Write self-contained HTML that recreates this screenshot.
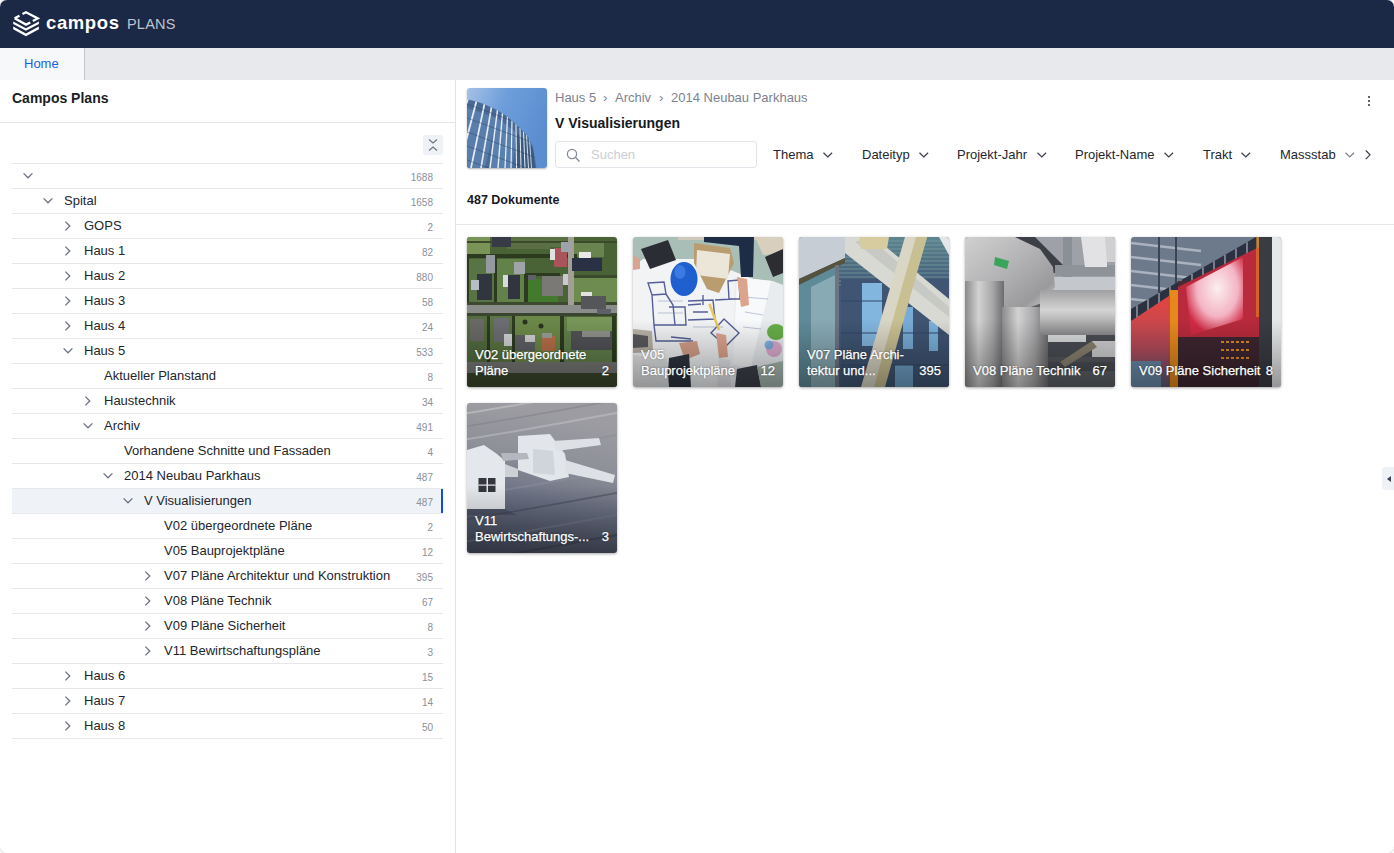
<!DOCTYPE html>
<html><head><meta charset="utf-8">
<style>
*{box-sizing:border-box;margin:0;padding:0}
html,body{width:1394px;height:853px;overflow:hidden;background:#fff;font-family:"Liberation Sans",sans-serif;color:#1f2329}
.app{position:absolute;left:0;top:0;width:1394px;height:853px;border-radius:7px;overflow:hidden;background:#fff;box-shadow:0 0 1px 1px rgba(0,0,0,.12)}
.hdr{position:absolute;left:0;top:0;width:1394px;height:48px;background:#1b2846}
.tabs{position:absolute;left:0;top:48px;width:1394px;height:32px;background:#e8e9ed}
.tab{position:absolute;left:0;top:0;width:85px;height:32px;background:#f7f8fa;border-right:1px solid #c3c7d0}
.tab span{position:absolute;left:24px;top:8px;font-size:13px;line-height:15px;color:#1862e0}
.a{position:absolute;white-space:nowrap}
.left{position:absolute;left:0;top:80px;width:456px;height:773px;border-right:1px solid #e2e4ea}
.ttl{font-size:14px;font-weight:bold;color:#1a1d22}
.row{position:absolute;left:12px;width:431px;height:26px;border-top:1px solid #e6e8ec;border-bottom:1px solid #e6e8ec}
.lbl{position:absolute;top:5px;font-size:13px;line-height:15px;color:#22262c;white-space:nowrap}
.num{position:absolute;right:10px;top:8px;font-size:10px;line-height:12px;color:#8a909b}
.chev{position:absolute;top:7px;width:10px;height:10px}
.right{position:absolute;left:456px;top:80px;width:938px;height:773px}
.bc{top:10px;font-size:13px;line-height:15px;color:#7c8290}
.filt{position:absolute;top:147px;font-size:13px;line-height:15px;color:#23272e;white-space:nowrap}
.card{position:absolute;width:150px;height:150px;border-radius:3px;overflow:hidden;box-shadow:0 1px 3px rgba(0,0,0,.35)}
.card svg{position:absolute;left:0;top:0}
.cap{position:absolute;left:8px;right:8px;bottom:8px;color:#fff;font-size:13px;line-height:16px;text-shadow:0 0 2px rgba(0,0,0,.6);-webkit-text-stroke:0.25px #fff}
.cap .n{position:absolute;right:0;bottom:0}
.shade{position:absolute;left:0;top:0;width:150px;height:150px;background:linear-gradient(to bottom,rgba(0,0,0,0) 55%,rgba(0,0,0,.35) 100%)}
</style></head><body>
<div class="app">
<div class="hdr">
  <svg class="a" style="left:12px;top:10px" width="28" height="28" viewBox="12 10 28 28">
    <g fill="none" stroke="#fff" stroke-width="2.3" stroke-linejoin="miter">
      <path d="M14.6 18.3 L19.5 15.7 M22.5 14.1 L26 12.3 L37.9 18.4 L32.8 21 M30.3 22.4 L26 24.6 L14.6 18.3"/>
    </g>
    <polygon fill="#fff" points="13.2,21.4 25.9,28.2 38.9,21.4 38.9,23.9 25.9,30.7 13.2,23.9"/>
    <polygon fill="#fff" points="13.2,26.6 25.9,33.6 38.9,26.6 38.9,29.3 25.9,36.3 13.2,29.3"/>
  </svg>
  <div class="a" style="left:46px;top:12px;font-size:18.5px;line-height:22px;font-weight:bold;color:#fff;letter-spacing:0.6px">campos</div>
  <div class="a" style="left:127px;top:16px;font-size:14.5px;line-height:17px;color:#bfc4ce;letter-spacing:0.2px">PLANS</div>
</div>
<div class="tabs"><div class="tab"><span>Home</span></div></div>

<div class="left" id="left">
  <div class="a ttl" style="left:12px;top:10px">Campos Plans</div>
  <div class="a" style="left:0;top:42px;width:455px;height:1px;background:#e3e5ea"></div>
  <div class="a" style="left:423px;top:55px;width:20px;height:20px;border-radius:3px;background:#eef2f7">
    <svg width="20" height="20" viewBox="0 0 20 20"><path d="M6 4.5 L10 8 L14 4.5 M6 15.5 L10 12 L14 15.5" fill="none" stroke="#6b7280" stroke-width="1.1"/></svg>
  </div>
  <div class="a" style="left:12px;top:83px;width:431px;height:1px;background:#e5e7eb"></div>
<svg class="a" style="left:22px;top:90px" width="12" height="12" viewBox="0 0 12 12"><path d="M1.6 3.4 L6 7.8 L10.4 3.4" fill="none" stroke="#6b7282" stroke-width="1.3"/></svg>
<div class="num" style="left:373px;width:60px;text-align:right;top:92px">1688</div>
<div class="a" style="left:12px;top:108px;width:431px;height:1px;background:#e5e7eb"></div>
<svg class="a" style="left:42px;top:115px" width="12" height="12" viewBox="0 0 12 12"><path d="M1.6 3.4 L6 7.8 L10.4 3.4" fill="none" stroke="#6b7282" stroke-width="1.3"/></svg>
<div class="lbl" style="left:64px;top:113px">Spital</div>
<div class="num" style="left:373px;width:60px;text-align:right;top:117px">1658</div>
<div class="a" style="left:12px;top:133px;width:431px;height:1px;background:#e5e7eb"></div>
<svg class="a" style="left:62px;top:140px" width="12" height="12" viewBox="0 0 12 12"><path d="M3.4 1.6 L7.8 6 L3.4 10.4" fill="none" stroke="#6b7282" stroke-width="1.3"/></svg>
<div class="lbl" style="left:84px;top:138px">GOPS</div>
<div class="num" style="left:373px;width:60px;text-align:right;top:142px">2</div>
<div class="a" style="left:12px;top:158px;width:431px;height:1px;background:#e5e7eb"></div>
<svg class="a" style="left:62px;top:165px" width="12" height="12" viewBox="0 0 12 12"><path d="M3.4 1.6 L7.8 6 L3.4 10.4" fill="none" stroke="#6b7282" stroke-width="1.3"/></svg>
<div class="lbl" style="left:84px;top:163px">Haus 1</div>
<div class="num" style="left:373px;width:60px;text-align:right;top:167px">82</div>
<div class="a" style="left:12px;top:183px;width:431px;height:1px;background:#e5e7eb"></div>
<svg class="a" style="left:62px;top:190px" width="12" height="12" viewBox="0 0 12 12"><path d="M3.4 1.6 L7.8 6 L3.4 10.4" fill="none" stroke="#6b7282" stroke-width="1.3"/></svg>
<div class="lbl" style="left:84px;top:188px">Haus 2</div>
<div class="num" style="left:373px;width:60px;text-align:right;top:192px">880</div>
<div class="a" style="left:12px;top:208px;width:431px;height:1px;background:#e5e7eb"></div>
<svg class="a" style="left:62px;top:215px" width="12" height="12" viewBox="0 0 12 12"><path d="M3.4 1.6 L7.8 6 L3.4 10.4" fill="none" stroke="#6b7282" stroke-width="1.3"/></svg>
<div class="lbl" style="left:84px;top:213px">Haus 3</div>
<div class="num" style="left:373px;width:60px;text-align:right;top:217px">58</div>
<div class="a" style="left:12px;top:233px;width:431px;height:1px;background:#e5e7eb"></div>
<svg class="a" style="left:62px;top:240px" width="12" height="12" viewBox="0 0 12 12"><path d="M3.4 1.6 L7.8 6 L3.4 10.4" fill="none" stroke="#6b7282" stroke-width="1.3"/></svg>
<div class="lbl" style="left:84px;top:238px">Haus 4</div>
<div class="num" style="left:373px;width:60px;text-align:right;top:242px">24</div>
<div class="a" style="left:12px;top:258px;width:431px;height:1px;background:#e5e7eb"></div>
<svg class="a" style="left:62px;top:265px" width="12" height="12" viewBox="0 0 12 12"><path d="M1.6 3.4 L6 7.8 L10.4 3.4" fill="none" stroke="#6b7282" stroke-width="1.3"/></svg>
<div class="lbl" style="left:84px;top:263px">Haus 5</div>
<div class="num" style="left:373px;width:60px;text-align:right;top:267px">533</div>
<div class="a" style="left:12px;top:283px;width:431px;height:1px;background:#e5e7eb"></div>
<div class="lbl" style="left:104px;top:288px">Aktueller Planstand</div>
<div class="num" style="left:373px;width:60px;text-align:right;top:292px">8</div>
<div class="a" style="left:12px;top:308px;width:431px;height:1px;background:#e5e7eb"></div>
<svg class="a" style="left:82px;top:315px" width="12" height="12" viewBox="0 0 12 12"><path d="M3.4 1.6 L7.8 6 L3.4 10.4" fill="none" stroke="#6b7282" stroke-width="1.3"/></svg>
<div class="lbl" style="left:104px;top:313px">Haustechnik</div>
<div class="num" style="left:373px;width:60px;text-align:right;top:317px">34</div>
<div class="a" style="left:12px;top:333px;width:431px;height:1px;background:#e5e7eb"></div>
<svg class="a" style="left:82px;top:340px" width="12" height="12" viewBox="0 0 12 12"><path d="M1.6 3.4 L6 7.8 L10.4 3.4" fill="none" stroke="#6b7282" stroke-width="1.3"/></svg>
<div class="lbl" style="left:104px;top:338px">Archiv</div>
<div class="num" style="left:373px;width:60px;text-align:right;top:342px">491</div>
<div class="a" style="left:12px;top:358px;width:431px;height:1px;background:#e5e7eb"></div>
<div class="lbl" style="left:124px;top:363px">Vorhandene Schnitte und Fassaden</div>
<div class="num" style="left:373px;width:60px;text-align:right;top:367px">4</div>
<div class="a" style="left:12px;top:383px;width:431px;height:1px;background:#e5e7eb"></div>
<svg class="a" style="left:102px;top:390px" width="12" height="12" viewBox="0 0 12 12"><path d="M1.6 3.4 L6 7.8 L10.4 3.4" fill="none" stroke="#6b7282" stroke-width="1.3"/></svg>
<div class="lbl" style="left:124px;top:388px">2014 Neubau Parkhaus</div>
<div class="num" style="left:373px;width:60px;text-align:right;top:392px">487</div>
<div class="a" style="left:12px;top:408px;width:431px;height:1px;background:#e5e7eb"></div>
<div class="a" style="left:12px;top:409px;width:429px;height:24px;background:#eff2f7"></div>
<div class="a" style="left:441px;top:409px;width:2px;height:24px;background:#0a50d8"></div>
<svg class="a" style="left:122px;top:415px" width="12" height="12" viewBox="0 0 12 12"><path d="M1.6 3.4 L6 7.8 L10.4 3.4" fill="none" stroke="#6b7282" stroke-width="1.3"/></svg>
<div class="lbl" style="left:144px;top:413px">V Visualisierungen</div>
<div class="num" style="left:373px;width:60px;text-align:right;top:417px">487</div>
<div class="a" style="left:12px;top:433px;width:431px;height:1px;background:#e5e7eb"></div>
<div class="lbl" style="left:164px;top:438px">V02 übergeordnete Pläne</div>
<div class="num" style="left:373px;width:60px;text-align:right;top:442px">2</div>
<div class="a" style="left:12px;top:458px;width:431px;height:1px;background:#e5e7eb"></div>
<div class="lbl" style="left:164px;top:463px">V05 Bauprojektpläne</div>
<div class="num" style="left:373px;width:60px;text-align:right;top:467px">12</div>
<div class="a" style="left:12px;top:483px;width:431px;height:1px;background:#e5e7eb"></div>
<svg class="a" style="left:142px;top:490px" width="12" height="12" viewBox="0 0 12 12"><path d="M3.4 1.6 L7.8 6 L3.4 10.4" fill="none" stroke="#6b7282" stroke-width="1.3"/></svg>
<div class="lbl" style="left:164px;top:488px">V07 Pläne Architektur und Konstruktion</div>
<div class="num" style="left:373px;width:60px;text-align:right;top:492px">395</div>
<div class="a" style="left:12px;top:508px;width:431px;height:1px;background:#e5e7eb"></div>
<svg class="a" style="left:142px;top:515px" width="12" height="12" viewBox="0 0 12 12"><path d="M3.4 1.6 L7.8 6 L3.4 10.4" fill="none" stroke="#6b7282" stroke-width="1.3"/></svg>
<div class="lbl" style="left:164px;top:513px">V08 Pläne Technik</div>
<div class="num" style="left:373px;width:60px;text-align:right;top:517px">67</div>
<div class="a" style="left:12px;top:533px;width:431px;height:1px;background:#e5e7eb"></div>
<svg class="a" style="left:142px;top:540px" width="12" height="12" viewBox="0 0 12 12"><path d="M3.4 1.6 L7.8 6 L3.4 10.4" fill="none" stroke="#6b7282" stroke-width="1.3"/></svg>
<div class="lbl" style="left:164px;top:538px">V09 Pläne Sicherheit</div>
<div class="num" style="left:373px;width:60px;text-align:right;top:542px">8</div>
<div class="a" style="left:12px;top:558px;width:431px;height:1px;background:#e5e7eb"></div>
<svg class="a" style="left:142px;top:565px" width="12" height="12" viewBox="0 0 12 12"><path d="M3.4 1.6 L7.8 6 L3.4 10.4" fill="none" stroke="#6b7282" stroke-width="1.3"/></svg>
<div class="lbl" style="left:164px;top:563px">V11 Bewirtschaftungspläne</div>
<div class="num" style="left:373px;width:60px;text-align:right;top:567px">3</div>
<div class="a" style="left:12px;top:583px;width:431px;height:1px;background:#e5e7eb"></div>
<svg class="a" style="left:62px;top:590px" width="12" height="12" viewBox="0 0 12 12"><path d="M3.4 1.6 L7.8 6 L3.4 10.4" fill="none" stroke="#6b7282" stroke-width="1.3"/></svg>
<div class="lbl" style="left:84px;top:588px">Haus 6</div>
<div class="num" style="left:373px;width:60px;text-align:right;top:592px">15</div>
<div class="a" style="left:12px;top:608px;width:431px;height:1px;background:#e5e7eb"></div>
<svg class="a" style="left:62px;top:615px" width="12" height="12" viewBox="0 0 12 12"><path d="M3.4 1.6 L7.8 6 L3.4 10.4" fill="none" stroke="#6b7282" stroke-width="1.3"/></svg>
<div class="lbl" style="left:84px;top:613px">Haus 7</div>
<div class="num" style="left:373px;width:60px;text-align:right;top:617px">14</div>
<div class="a" style="left:12px;top:633px;width:431px;height:1px;background:#e5e7eb"></div>
<svg class="a" style="left:62px;top:640px" width="12" height="12" viewBox="0 0 12 12"><path d="M3.4 1.6 L7.8 6 L3.4 10.4" fill="none" stroke="#6b7282" stroke-width="1.3"/></svg>
<div class="lbl" style="left:84px;top:638px">Haus 8</div>
<div class="num" style="left:373px;width:60px;text-align:right;top:642px">50</div>
<div class="a" style="left:12px;top:658px;width:431px;height:1px;background:#e5e7eb"></div>
</div>

<div class="right">
  <div class="a" style="left:11px;top:8px;width:80px;height:80px;border-radius:3px;overflow:hidden;box-shadow:0 1px 2px rgba(0,0,0,.3)" id="thumb"><svg width="80" height="80" viewBox="0 0 80 80" preserveAspectRatio="none"><defs><linearGradient id="gta" x1="0" y1="0" x2="1" y2="0.4"><stop offset="0" stop-color="#a6c2e6"/><stop offset=".45" stop-color="#6e9edb"/><stop offset="1" stop-color="#5b8dd0"/></linearGradient><clipPath id="tcl"><polygon points="0,11.3 9.4,13.6 16.9,16 30,22 40.3,28.6 52.5,39.4 61,48.8 65.7,58 69.4,80 0,80"/></clipPath></defs><rect x="0" y="0" width="80" height="80" fill="url(#gta)" /><g clip-path="url(#tcl)"><rect x="0" y="0" width="80" height="80" fill="#4a6a94" /><polygon points="0,20 30,30 18,80 0,80" fill="#5a7eac" /><polygon points="30,30 50,45 45,80 22,80" fill="#5a80b0" /><polygon points="50,45 66,60 68,80 48,80" fill="#3d5a80" /><line x1="1" y1="11" x2="-22" y2="80" stroke="#e6edf5" stroke-width="1.8"/><line x1="9.5" y1="13" x2="-8" y2="80" stroke="#e6edf5" stroke-width="1.8"/><line x1="17.5" y1="16" x2="4" y2="80" stroke="#e6edf5" stroke-width="1.7"/><line x1="24.5" y1="19" x2="14" y2="80" stroke="#e6edf5" stroke-width="1.6"/><line x1="30.5" y1="22" x2="23" y2="80" stroke="#e6edf5" stroke-width="1.5"/><line x1="35.5" y1="25" x2="31" y2="80" stroke="#e6edf5" stroke-width="1.4"/><line x1="40.5" y1="28.6" x2="38" y2="80" stroke="#e6edf5" stroke-width="1.3"/><line x1="45" y1="32" x2="44" y2="80" stroke="#e6edf5" stroke-width="1.2"/><line x1="49" y1="36" x2="49.5" y2="80" stroke="#e6edf5" stroke-width="1.1"/><line x1="53" y1="40" x2="54" y2="80" stroke="#e6edf5" stroke-width="1"/><line x1="56.5" y1="43.5" x2="58" y2="80" stroke="#e6edf5" stroke-width="1"/><line x1="59.5" y1="47" x2="61.5" y2="80" stroke="#e6edf5" stroke-width="0.9"/><line x1="62.5" y1="51" x2="64.5" y2="80" stroke="#e6edf5" stroke-width="0.8"/><g stroke="#243a58" stroke-width=".7" opacity=".55"><line x1="-5" y1="14" x2="75" y2="44"/><line x1="-5" y1="28" x2="75" y2="58"/><line x1="-5" y1="42" x2="75" y2="72"/><line x1="-5" y1="56" x2="75" y2="86"/><line x1="-5" y1="70" x2="75" y2="100"/></g></g></svg></div>
  <div class="a bc" style="left:99px">Haus 5</div><div class="a bc" style="left:147px">›</div><div class="a bc" style="left:159px">Archiv</div><div class="a bc" style="left:203px">›</div><div class="a bc" style="left:215px">2014 Neubau Parkhaus</div>
  <div class="a" style="left:99px;top:35px;font-size:14px;line-height:17px;font-weight:bold;color:#16191e">V Visualisierungen</div>
  <div class="a" style="left:99px;top:61px;width:202px;height:27px;border:1px solid #e3e5ea;border-radius:3px">
    <svg class="a" style="left:10px;top:6px" width="15" height="15" viewBox="0 0 15 15"><circle cx="6" cy="6" r="4.6" fill="none" stroke="#858b96" stroke-width="1.3"/><path d="M9.3 9.3 L13.5 13.5" stroke="#858b96" stroke-width="1.4"/></svg>
    <div class="a" style="left:35px;top:5px;font-size:13px;line-height:15px;color:#c9cdd5">Suchen</div>
  </div>
  <div class="a" style="left:11px;top:113px;font-size:12.5px;line-height:15px;font-weight:bold;color:#16191e">487 Dokumente</div>
  <div class="a" style="left:0;top:144px;width:938px;height:1px;background:#e6e8ec"></div>
  <div class="a" style="left:912px;top:16px;width:3px;height:12px">
    <div class="a" style="left:0;top:0;width:2.2px;height:2.2px;border-radius:50%;background:#2a2f38"></div>
    <div class="a" style="left:0;top:4px;width:2.2px;height:2.2px;border-radius:50%;background:#2a2f38"></div>
    <div class="a" style="left:0;top:8px;width:2.2px;height:2.2px;border-radius:50%;background:#2a2f38"></div>
  </div>
  <div class="a" style="left:926px;top:387px;width:12px;height:23px;background:#eef1f6;border-radius:3px 0 0 3px">
    <svg class="a" style="left:4px;top:7.5px" width="6" height="8" viewBox="0 0 6 8"><path d="M1 4 L5 1 L5 7 Z" fill="#3a4150"/></svg>
  </div>
</div>
<div class="filt" style="left:773px">Thema</div>
<svg class="a" style="left:822px;top:149px" width="12" height="12" viewBox="0 0 12 12"><path d="M1.5 3.8 L5.8 8 L10.1 3.8" fill="none" stroke="#3a3f48" stroke-width="1.2"/></svg>
<div class="filt" style="left:862px">Dateityp</div>
<svg class="a" style="left:918px;top:149px" width="12" height="12" viewBox="0 0 12 12"><path d="M1.5 3.8 L5.8 8 L10.1 3.8" fill="none" stroke="#3a3f48" stroke-width="1.2"/></svg>
<div class="filt" style="left:957px">Projekt-Jahr</div>
<svg class="a" style="left:1036px;top:149px" width="12" height="12" viewBox="0 0 12 12"><path d="M1.5 3.8 L5.8 8 L10.1 3.8" fill="none" stroke="#3a3f48" stroke-width="1.2"/></svg>
<div class="filt" style="left:1075px">Projekt-Name</div>
<svg class="a" style="left:1163px;top:149px" width="12" height="12" viewBox="0 0 12 12"><path d="M1.5 3.8 L5.8 8 L10.1 3.8" fill="none" stroke="#3a3f48" stroke-width="1.2"/></svg>
<div class="filt" style="left:1203px">Trakt</div>
<svg class="a" style="left:1240px;top:149px" width="12" height="12" viewBox="0 0 12 12"><path d="M1.5 3.8 L5.8 8 L10.1 3.8" fill="none" stroke="#3a3f48" stroke-width="1.2"/></svg>
<div class="filt" style="left:1280px">Massstab</div>
<svg class="a" style="left:1344px;top:149px" width="12" height="12" viewBox="0 0 12 12"><path d="M1.5 3.8 L5.8 8 L10.1 3.8" fill="none" stroke="#7d828c" stroke-width="1.2"/></svg>
<svg class="a" style="left:1362px;top:149px" width="12" height="12" viewBox="0 0 12 12"><path d="M3.8 1.5 L8 5.8 L3.8 10.1" fill="none" stroke="#3a3f48" stroke-width="1.2"/></svg>
<div class="card" style="left:467px;top:237px"><svg width="150" height="150" viewBox="0 0 150 150" preserveAspectRatio="none"><defs></defs><rect x="0" y="0" width="150" height="150" fill="#4a6336" /><rect x="0" y="0" width="23" height="17" fill="#7a9458" /><rect x="40" y="0" width="43" height="12" fill="#5a7044" /><rect x="83" y="0" width="20" height="10" fill="#5c7046" /><rect x="107" y="5" width="30" height="15" fill="#6a8450" /><rect x="2" y="22" width="26" height="46" fill="#587444" /><rect x="30" y="22" width="28" height="46" fill="#62824a" /><rect x="61" y="42" width="30" height="26" fill="#437a2e" /><rect x="107" y="40" width="43" height="28" fill="#6e8c50" /><rect x="0" y="78" width="20" height="47" fill="#536c40" /><rect x="23" y="78" width="22" height="47" fill="#5a7442" /><rect x="48" y="78" width="45" height="47" fill="#6c8848" /><rect x="97" y="80" width="49" height="45" fill="#62804a" /><rect x="100" y="80" width="46" height="14" fill="#789658" /><rect x="0" y="17" width="110" height="4" fill="#2c3a20" /><rect x="0" y="4" width="150" height="2" fill="#3a4a2a" /><rect x="0" y="20" width="2" height="48" fill="#2c3a20" /><rect x="27" y="20" width="3" height="48" fill="#2c3a20" /><rect x="57" y="36" width="4" height="32" fill="#2c3a20" /><rect x="58" y="36" width="35" height="3" fill="#2c3a20" /><rect x="104" y="38" width="46" height="3" fill="#3a4a2a" /><rect x="20" y="77" width="3" height="48" fill="#2c3a20" /><rect x="45" y="77" width="3" height="48" fill="#2c3a20" /><rect x="93" y="77" width="4" height="48" fill="#2c3a20" /><rect x="145" y="77" width="4" height="48" fill="#2c3a20" /><rect x="0" y="76" width="150" height="3" fill="#3a4530" /><rect x="0" y="65" width="150" height="3" fill="#3e4a30" /><rect x="0" y="68" width="150" height="8" fill="#8b8d8a" /><rect x="101" y="0" width="6" height="68" fill="#a29f96" /><rect x="0" y="125" width="150" height="11" fill="#767874" /><rect x="0" y="136" width="150" height="14" fill="#3b472c" /><rect x="25" y="0" width="19" height="10" fill="#373b46" /><rect x="10" y="37" width="15" height="26" fill="#30353f" /><rect x="4" y="43" width="8" height="10" fill="#b8bec8" /><rect x="41" y="38" width="12" height="24" fill="#30353f" /><rect x="36" y="38" width="5" height="12" fill="#d8dadc" /><rect x="75" y="39" width="21" height="20" fill="#7a7975" /><rect x="96" y="37" width="5" height="11" fill="#c8cacc" /><rect x="105" y="21" width="30" height="13" fill="#2a3144" /><rect x="87" y="11" width="13" height="19" fill="#a8545a" /><rect x="83" y="12" width="5" height="11" fill="#e2e2e0" /><rect x="94" y="5" width="11" height="10" fill="#9ea3aa" /><rect x="112" y="15" width="12" height="6" fill="#e8e8e6" /><rect x="114" y="59" width="25" height="13" fill="#55565a" /><rect x="114" y="55" width="11" height="4" fill="#e2e2e2" /><rect x="130" y="72" width="14" height="5" fill="#5d6068" /><rect x="3" y="82" width="14" height="22" fill="#6a6965" /><rect x="27" y="81" width="15" height="24" fill="#6c6d72" /><rect x="37" y="97" width="8" height="12" fill="#d0d2d4" /><rect x="104" y="94" width="41" height="19" fill="#505257" /><rect x="115" y="94" width="28" height="6" fill="#8f8f8b" /><rect x="75" y="99" width="13" height="15" fill="#b86f48" /><rect x="75" y="96" width="10" height="5" fill="#9a9a96" /><rect x="48" y="98" width="20" height="16" fill="#5e6064" /><rect x="58" y="98" width="10" height="7" fill="#d0d0d2" /><rect x="19" y="18" width="9" height="18" fill="#959aa0" /><rect x="47" y="25" width="11" height="12" fill="#a0a3a8" /><rect x="61" y="38" width="8" height="5" fill="#5e6268" /><circle cx="58" cy="85" r="2.5" fill="#2a3222"/><circle cx="74" cy="89" r="2.5" fill="#2a3222"/></svg><div class="shade"></div><div class="cap">V02 übergeordnete<br>Pläne<span class="n">2</span></div></div>
<div class="card" style="left:633px;top:237px"><svg width="150" height="150" viewBox="0 0 150 150" preserveAspectRatio="none"><defs></defs><rect x="0" y="0" width="150" height="150" fill="#a9beb6" /><rect x="45" y="0" width="80" height="3" fill="#cfc9bb" /><polygon points="122,0 150,0 150,16 130,18" fill="#d9cfbd" /><polygon points="0,30 10,22 70,22 125,44 150,48 150,130 120,150 30,150 0,128" fill="#f1f3f5" /><polygon points="102,40 140,44 150,48 150,132 116,150 100,140" fill="#e9ecef" /><polygon points="104,40 138,44 118,130 100,128" fill="#f8f9fa" /><g fill="none" stroke="#3a4486" stroke-width="1.4" opacity=".85"><path d="M15 46 L31 45 L33 57 L19 58 Z M19 58 L21 88 L42 88 L40 68 L33 57 M36 70 L52 70 L53 88 L42 88 M55 64 L80 63 L82 82 L55 83 M95 44 L106 43 L107 62 L96 62 Z M38 100 L58 102 M78 96 L91 82 L106 96 L93 109 Z M21 88 L23 104 L60 104 M55 68 L68 67 M70 58 L70 68 M82 63 L100 62 M60 75 L75 75"/></g><g fill="none" stroke="#5a64a0" stroke-width=".6" opacity=".6"><path d="M25 64 L50 64 M25 76 L50 76 M60 90 L90 90 M110 60 L135 62 M112 75 L130 78 M110 90 L128 92"/></g><polygon points="8,12 35,3 43,23 17,32" fill="#2a2d33" /><polygon points="61,6 97,11 101,26 86,56 74,52 61,26" fill="#b99c70" /><polygon points="64,13 97,17 95,42 63,38" fill="#ebe6d8" /><ellipse cx="51" cy="42" rx="13.5" ry="17" fill="#1f5fcf"/><ellipse cx="47" cy="35" rx="5.5" ry="7" fill="#3b7ae0"/><polygon points="71,0 121,0 120,40 108,40 106,9 71,5" fill="#1f2c46" /><polygon points="132,20 150,12 150,36 140,40" fill="#2b2d31" /><polygon points="104,40 114,42 116,68 108,70" fill="#dca48d" /><polygon points="83,96 93,98 95,120 86,121" fill="#dca48d" /><polygon points="46,106 64,104 67,117 52,123" fill="#d6a08a" /><polygon points="0,18 7,22 7,32 0,33" fill="#d8a591" /><polygon points="0,92 19,94 20,115 0,116" fill="#b8b2a6" /><polygon points="0,97 15,99 15,110 0,111" fill="#5a5a5e" /><polygon points="36,121 56,117 58,150 34,150" fill="#2e3440" /><polygon points="0,118 34,122 36,150 0,150" fill="#e2e4e6" /><polygon points="86,121 97,123 98,150 84,150" fill="#e4e6ea" /><polygon points="104,132 124,128 128,150 102,150" fill="#3c4048" /><polygon points="124,130 150,124 150,150 128,150" fill="#a6b7b0" /><ellipse cx="143" cy="95" rx="9" ry="8" fill="#67ae48"/><circle cx="141" cy="112" r="8" fill="#d9a0c8" opacity=".85"/><circle cx="136" cy="108" r="4.5" fill="#6aa8e0" opacity=".8"/><rect x="80" y="66" width="2.5" height="28" fill="#e8c85a" transform="rotate(-20 81 80)"/></svg><div class="shade"></div><div class="cap">V05<br>Bauprojektpläne<span class="n">12</span></div></div>
<div class="card" style="left:799px;top:237px"><svg width="150" height="150" viewBox="0 0 150 150" preserveAspectRatio="none"><defs><linearGradient id="g3a" x1="0" y1="0" x2="0" y2="1"><stop offset="0" stop-color="#5f8790"/><stop offset="1" stop-color="#3d5575"/></linearGradient></defs><rect x="0" y="0" width="150" height="150" fill="#44597a" /><rect x="40" y="0" width="110" height="52" fill="url(#g3a)" /><g stroke="#7ea0a0" stroke-width="1.2" opacity=".7"><line x1="40" y1="4" x2="150" y2="4"/><line x1="40" y1="8" x2="150" y2="8"/><line x1="40" y1="12" x2="150" y2="12"/><line x1="40" y1="16" x2="150" y2="16"/><line x1="40" y1="20" x2="150" y2="20"/><line x1="40" y1="24" x2="150" y2="24"/><line x1="40" y1="28" x2="150" y2="28"/><line x1="40" y1="32" x2="150" y2="32"/><line x1="40" y1="36" x2="150" y2="36"/><line x1="40" y1="40" x2="150" y2="40"/><line x1="40" y1="44" x2="150" y2="44"/><line x1="40" y1="48" x2="150" y2="48"/></g><rect x="42" y="42" width="108" height="108" fill="#3f5573" /><rect x="63" y="46" width="20" height="63" fill="#82b6de" /><rect x="104" y="70" width="10" height="42" fill="#78acd6" /><rect x="130" y="84" width="9" height="30" fill="#7ab0da" /><rect x="96" y="128" width="18" height="22" fill="#6fa0c6" /><g stroke="#33486a" stroke-width="1"><line x1="42" y1="64" x2="150" y2="64"/><line x1="42" y1="96" x2="150" y2="96"/><line x1="42" y1="128" x2="150" y2="128"/></g><polygon points="0,0 46,0 46,21 0,42" fill="#c6cdd4" /><polygon points="0,42 46,21 46,26 0,48" fill="#55533e" /><polygon points="0,48 40,28 40,150 0,150" fill="#5f8a98" /><polygon points="12,50 36,38 36,150 12,150" fill="#88aab4" /><rect x="36" y="28" width="4" height="122" fill="#6d7585" /><polygon points="46,0 75,0 150,62 150,98 46,16" fill="#d9d9d4" /><polygon points="56,5 70,0 150,70 150,80" fill="#c7c9c4" /><polygon points="106,0 128,0 84,150 62,150" fill="#dad6c6" /><polygon points="117,0 128,0 86,150 75,150" fill="#c8bf92" /><polygon points="60,0 90,0 88,12 62,12" fill="#d6cca0" /><polygon points="140,0 150,0 150,18" fill="#e4e6e8" /></svg><div class="shade"></div><div class="cap">V07 Pläne Archi-<br>tektur und...<span class="n">395</span></div></div>
<div class="card" style="left:965px;top:237px"><svg width="150" height="150" viewBox="0 0 150 150" preserveAspectRatio="none"><defs><linearGradient id="g4a" x1="0" y1="0" x2="1" y2="1"><stop offset="0" stop-color="#d0d0d0"/><stop offset=".45" stop-color="#b4b4b6"/><stop offset=".8" stop-color="#9a9a9c"/><stop offset="1" stop-color="#d8d8d8"/></linearGradient><linearGradient id="g4b" x1="0" y1="0" x2="1" y2="0"><stop offset="0" stop-color="#8a8a8c"/><stop offset=".35" stop-color="#d2d2d2"/><stop offset=".7" stop-color="#a8a8aa"/><stop offset="1" stop-color="#6c6c6e"/></linearGradient><linearGradient id="g4c" x1="0" y1="0" x2="0" y2="1"><stop offset="0" stop-color="#a0a0a2"/><stop offset=".45" stop-color="#d4d4d4"/><stop offset="1" stop-color="#88888a"/></linearGradient></defs><rect x="0" y="0" width="150" height="150" fill="#5a5d62" /><rect x="49" y="0" width="101" height="53" fill="#9ea2a8" /><polygon points="49,0 70,0 98,28 98,36 85,36" fill="#3c3f46" /><rect x="98" y="0" width="9" height="53" fill="#8a9098" /><rect x="90" y="28" width="60" height="11" fill="#8e939a" /><rect x="78" y="40" width="72" height="13" fill="#c4c7cb" /><polygon points="116,0 142,0 142,30 120,30" fill="#e2e2e4" /><polygon points="140,0 150,0 150,25 142,25" fill="#d0d0d2" /><polygon points="0,0 50,0 75,12 88,30 90,50 80,65 60,72 30,72 0,52" fill="url(#g4a)" /><rect x="0" y="44" width="39" height="106" fill="url(#g4b)" /><rect x="37" y="70" width="46" height="80" fill="url(#g4b)" /><rect x="75" y="53" width="75" height="45" fill="url(#g4c)" /><rect x="83" y="98" width="67" height="52" fill="#4a4e55" /><rect x="83" y="98" width="38" height="7" fill="#d8dadc" /><rect x="127" y="104" width="23" height="16" fill="#d0d0d2" /><rect x="83" y="120" width="67" height="5" fill="#55585e" /><rect x="83" y="134" width="67" height="16" fill="#5c6066" /><polygon points="95,125 127,104 132,110 100,130" fill="#8a8270" /><polygon points="30,20 44,24 42,32 29,28" fill="#3aa55a" /></svg><div class="shade"></div><div class="cap">V08 Pläne Technik<span class="n">67</span></div></div>
<div class="card" style="left:1131px;top:237px"><svg width="150" height="150" viewBox="0 0 150 150" preserveAspectRatio="none"><defs><linearGradient id="g5a" x1="0" y1="0" x2="0" y2="1"><stop offset="0" stop-color="#e8443c"/><stop offset=".6" stop-color="#b64a5a"/><stop offset="1" stop-color="#5a5a7a"/></linearGradient><radialGradient id="g5b" cx=".55" cy=".4" r=".6"><stop offset="0" stop-color="#fbeff0"/><stop offset=".6" stop-color="#f4b4c4"/><stop offset="1" stop-color="#d02a44"/></radialGradient></defs><rect x="0" y="0" width="150" height="150" fill="#6d7a8c" /><g stroke="#a9b2be" stroke-width="2.5"><line x1="0" y1="6" x2="70" y2="14"/><line x1="0" y1="20" x2="70" y2="28"/><line x1="0" y1="34" x2="70" y2="42"/><line x1="0" y1="48" x2="70" y2="56"/><line x1="0" y1="62" x2="70" y2="70"/></g><g stroke="#3a4454" stroke-width="2"><line x1="28" y1="0" x2="28" y2="70"/><line x1="45" y1="0" x2="45" y2="70"/></g><polygon points="0,72 125,0 128,0 128,18 0,90" fill="#2c3142" /><g stroke="#c8ccd4" stroke-width="1"><line x1="6" y1="68.55" x2="6" y2="86.55"/><line x1="17" y1="62.225" x2="17" y2="80.225"/><line x1="28" y1="55.900000000000006" x2="28" y2="73.9"/><line x1="39" y1="49.575" x2="39" y2="67.575"/><line x1="50" y1="43.25" x2="50" y2="61.25"/><line x1="61" y1="36.925000000000004" x2="61" y2="54.925000000000004"/><line x1="72" y1="30.6" x2="72" y2="48.6"/><line x1="83" y1="24.275000000000006" x2="83" y2="42.275000000000006"/><line x1="94" y1="17.950000000000003" x2="94" y2="35.95"/><line x1="105" y1="11.625000000000007" x2="105" y2="29.625000000000007"/><line x1="116" y1="5.300000000000011" x2="116" y2="23.30000000000001"/><line x1="127" y1="-1.0249999999999915" x2="127" y2="16.97500000000001"/></g><polygon points="0,84 47,53 47,150 0,150" fill="url(#g5a)" /><rect x="39" y="53" width="8" height="97" fill="#e58a1a" /><rect x="47" y="44" width="81" height="106" fill="#4a2a36" /><polygon points="47,50 128,10 128,100 47,110" fill="#b82a3c" /><polygon points="55,50 112,20 112,82 60,98" fill="url(#g5b)" /><rect x="47" y="100" width="81" height="50" fill="#3e2630" /><g fill="#e08a2a"><rect x="90" y="104" width="3" height="2"/><rect x="90" y="112" width="3" height="2"/><rect x="90" y="120" width="3" height="2"/><rect x="95" y="104" width="3" height="2"/><rect x="95" y="112" width="3" height="2"/><rect x="95" y="120" width="3" height="2"/><rect x="100" y="104" width="3" height="2"/><rect x="100" y="112" width="3" height="2"/><rect x="100" y="120" width="3" height="2"/><rect x="105" y="104" width="3" height="2"/><rect x="105" y="112" width="3" height="2"/><rect x="105" y="120" width="3" height="2"/><rect x="110" y="104" width="3" height="2"/><rect x="110" y="112" width="3" height="2"/><rect x="110" y="120" width="3" height="2"/><rect x="115" y="104" width="3" height="2"/><rect x="115" y="112" width="3" height="2"/><rect x="115" y="120" width="3" height="2"/></g><rect x="128" y="0" width="13" height="150" fill="#3a3c44" /><rect x="125" y="0" width="3" height="80" fill="#e58a1a" opacity=".6"/><rect x="141" y="0" width="9" height="150" fill="#e4e6e8" /><rect x="0" y="124" width="30" height="26" fill="#6a8aa8" /></svg><div class="shade"></div><div class="cap">V09 Pläne Sicherheit<span class="n">8</span></div></div>
<div class="card" style="left:467px;top:403px"><svg width="150" height="150" viewBox="0 0 150 150" preserveAspectRatio="none"><defs><linearGradient id="g6a" x1="0.2" y1="0" x2="0" y2="1"><stop offset="0" stop-color="#9c9ca2"/><stop offset=".3" stop-color="#8e9098"/><stop offset=".55" stop-color="#6e7486"/><stop offset=".8" stop-color="#555c70"/><stop offset="1" stop-color="#4a5064"/></linearGradient></defs><rect x="0" y="0" width="150" height="150" fill="url(#g6a)" /><path d="M-10 12 Q75 -2 160 -18" stroke="#c8c6c8" stroke-width="2" fill="none" opacity="0.6"/><path d="M-10 25 Q75 11 160 -5" stroke="#7d7b80" stroke-width="1.5" fill="none" opacity="0.5"/><path d="M-10 38 Q75 24 160 8" stroke="#c4c4c8" stroke-width="2" fill="none" opacity="0.5"/><path d="M-10 60 Q75 46 160 30" stroke="#8a8c96" stroke-width="1.5" fill="none" opacity="0.5"/><path d="M-10 95 Q75 81 160 65" stroke="#8a90a0" stroke-width="2" fill="none" opacity="0.5"/><path d="M-10 118 Q75 104 160 88" stroke="#3e4456" stroke-width="1.5" fill="none" opacity="0.5"/><path d="M-10 140 Q75 126 160 110" stroke="#7a8090" stroke-width="2" fill="none" opacity="0.5"/><path d="M-10 160 Q75 146 160 130" stroke="#3a4052" stroke-width="2" fill="none" opacity="0.5"/><polygon points="0,47 17,42 30,51 38,58 38,106 0,106" fill="#e4e8ec" /><polygon points="38,61 51,66 51,74 38,74" fill="#cdd1d6" /><rect x="11.5" y="75" width="17" height="14" fill="#36373e" /><rect x="19.5" y="75" width="1.5" height="14" fill="#e4e8ec" /><rect x="11.5" y="81.5" width="17" height="1.2" fill="#e4e8ec" /><polygon points="51,33 83,31 98,51 102,74 83,78 51,67" fill="#e2e5ea" /><polygon points="66,46 86,48 88,72 66,70" fill="#d0d4db" /><polygon points="98,57 148,72 146,80 98,70" fill="#dde0e5" /><polygon points="86,38 132,35 134,42 90,48" fill="#dde0e5" /><polygon points="34,50 60,50 62,56 36,58" fill="#b4b8be" /><polygon points="0,106 38,106 50,112 0,112" fill="#3e4456" opacity=".5"/></svg><div class="shade"></div><div class="cap">V11<br>Bewirtschaftungs-...<span class="n">3</span></div></div>
</div>
</body></html>
